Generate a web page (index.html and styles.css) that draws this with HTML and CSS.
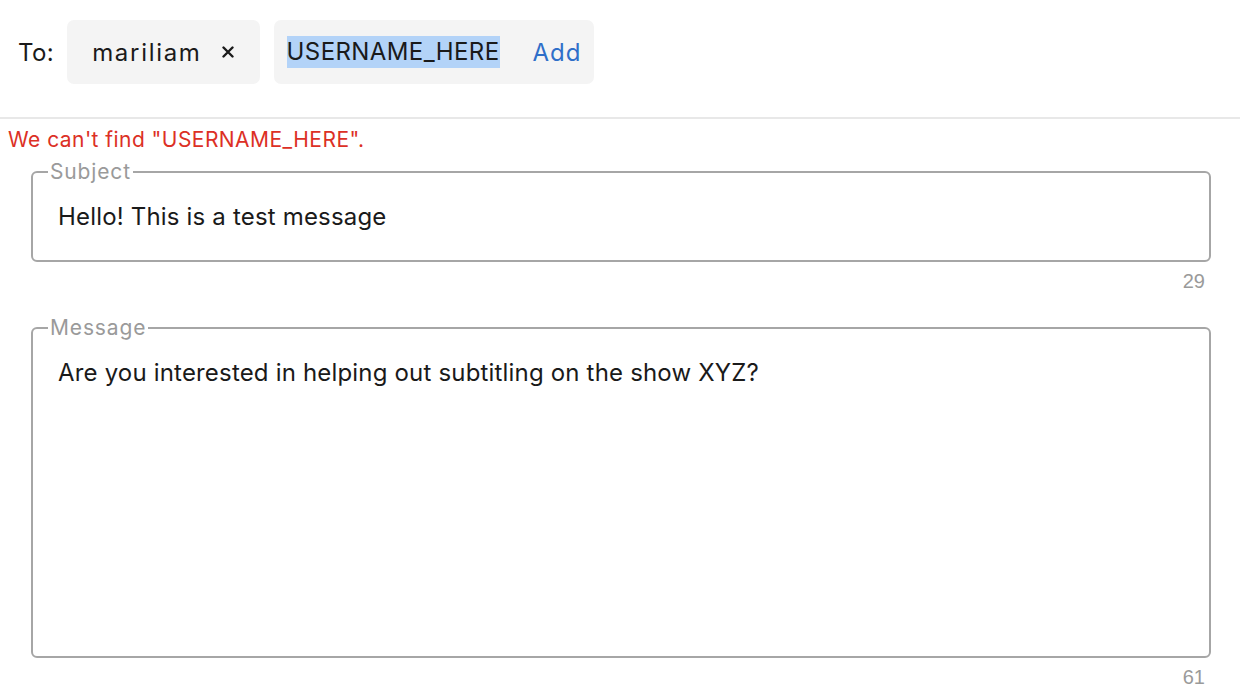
FILE: index.html
```html
<!DOCTYPE html>
<html>
<head>
<meta charset="utf-8">
<link rel="stylesheet" href="styles.css">
</head>
<body>
<div class="compose">
  <div class="to-row">
    <span class="to-label">To:</span>
    <div class="chip">
      <span class="chip-name">mariliam</span>
      <svg class="chip-x" width="12" height="12" viewBox="0 0 12 12"><path d="M1.5 1.5 L10.5 10.5 M10.5 1.5 L1.5 10.5" stroke="#1a1a1a" stroke-width="2.4" stroke-linecap="round"/></svg>
    </div>
    <div class="chip chip-input">
      <span class="sel">USERNAME_HERE</span>
      <span class="add">Add</span>
    </div>
  </div>
  <div class="error">We can't find "USERNAME_HERE".</div>
  <div class="fields">
    <fieldset class="box subject">
      <legend>Subject</legend>
      <div class="value">Hello! This is a test message</div>
    </fieldset>
    <div class="count">29</div>
    <fieldset class="box message">
      <legend>Message</legend>
      <div class="value">Are you interested in helping out subtitling on the show XYZ?</div>
    </fieldset>
    <div class="count">61</div>
  </div>
</div>
</body>
</html>
```
FILE: styles.css
```css
html, body {
  margin: 0;
  padding: 0;
  background: #ffffff;
}
body {
  font-family: Inter, "Noto Sans", sans-serif;
  color: #1a1a1a;
  width: 1240px;
  height: 698px;
  overflow: hidden;
}
.to-row {
  display: flex;
  align-items: center;
  padding: 20px 0 33px 18px;
  height: 64px;
  border-bottom: 2px solid #e8e8e8;
}
.to-label {
  font-size: 24px;
  letter-spacing: 0.4px;
  margin-right: 13px;
}
.chip {
  display: flex;
  align-items: center;
  height: 64px;
  background: #f4f4f4;
  border-radius: 7px;
  padding: 0 26px 0 25px;
  font-size: 24px;
  margin-right: 14px;
}
.chip-name {
  letter-spacing: 1.7px;
  margin-right: 20px;
}
.chip-x {
  display: block;
}
.chip-input {
  padding: 0 12px 0 13px;
}
.sel {
  background: #b3d3f8;
  line-height: 32px;
  letter-spacing: 0.4px;
}
.add {
  color: #2f6fc9;
  letter-spacing: 1px;
  margin-left: 33px;
}
.error {
  color: #dc3025;
  font-size: 21px;
  letter-spacing: 0.45px;
  line-height: 26px;
  padding: 8px 0 0 8px;
  height: 33px;
}
.fields {
  padding: 0 29px 0 31px;
}
.box {
  margin: 0;
  border: 2px solid #a6a6a6;
  border-radius: 6px;
  padding: 0 24px 0 25px;
  min-width: 0;
  box-sizing: border-box;
}
.box legend {
  color: #9a9a9a;
  font-size: 21px;
  line-height: 24px;
  letter-spacing: 0.85px;
  padding: 0 2px;
  margin-left: -10px;
}
.subject {
  height: 102px;
}
.message {
  height: 342px;
}
.value {
  font-size: 24px;
  letter-spacing: 0.18px;
  line-height: 30px;
  padding-top: 18px;
}
.count {
  text-align: right;
  font-family: "Liberation Sans", Arial, sans-serif;
  color: #9a9a9a;
  font-size: 20px;
  line-height: 24px;
  padding: 7px 6px 0 0;
  height: 24px;
  margin-bottom: 23px;
}
```
